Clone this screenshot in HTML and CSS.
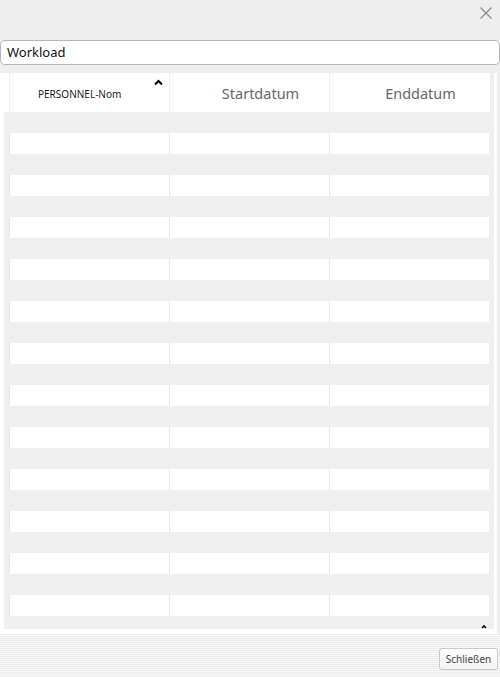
FILE: index.html
```html
<!DOCTYPE html>
<html>
<head>
<meta charset="utf-8">
<link rel="stylesheet" href="styles.css">
</head>
<body>
<div class="dialog">
  <div class="titlebar">
    <span class="close"><svg width="12" height="12" viewBox="0 0 12 12"><path d="M0.5 0.5L11.5 11.5M11.5 0.5L0.5 11.5" stroke="#8a8a8a" stroke-width="1.2" fill="none"/></svg></span>
  </div>
  <div class="title-input">Workload</div>
  <div class="panel">
    <div class="scroll">
      <div class="head">
        <div class="hcell first">PERSONNEL-Nom<span class="sort"><svg width="9" height="7" viewBox="0 0 9 7"><path d="M1 5.5L4.5 2L8 5.5" stroke="#000" stroke-width="2" fill="none"/></svg></span></div>
        <div class="hcell big">Startdatum</div>
        <div class="hcell big">Enddatum</div>
      </div>
      <div class="rows">
        <div class="row"></div><div class="row w"><div></div><div></div><div></div></div>
        <div class="row"></div><div class="row w"><div></div><div></div><div></div></div>
        <div class="row"></div><div class="row w"><div></div><div></div><div></div></div>
        <div class="row"></div><div class="row w"><div></div><div></div><div></div></div>
        <div class="row"></div><div class="row w"><div></div><div></div><div></div></div>
        <div class="row"></div><div class="row w"><div></div><div></div><div></div></div>
        <div class="row"></div><div class="row w"><div></div><div></div><div></div></div>
        <div class="row"></div><div class="row w"><div></div><div></div><div></div></div>
        <div class="row"></div><div class="row w"><div></div><div></div><div></div></div>
        <div class="row"></div><div class="row w"><div></div><div></div><div></div></div>
        <div class="row"></div><div class="row w"><div></div><div></div><div></div></div>
        <div class="row"></div><div class="row w"><div></div><div></div><div></div></div>
      </div>
      <span class="scroll-caret"><svg width="6" height="5" viewBox="0 0 6 5"><path d="M1 4L3 2L5 4" stroke="#000" stroke-width="1.6" fill="none"/></svg></span>
    </div>
  </div>
  <div class="footer">
    <button class="btn">Schließen</button>
  </div>
</div>
</body>
</html>
```

FILE: styles.css
```css
html, body {
  margin: 0;
  padding: 0;
}
body {
  width: 500px;
  height: 677px;
  overflow: hidden;
  background: #eeeeee;
  font-family: "Noto Sans", "Open Sans", sans-serif;
}
.dialog {
  display: flex;
  flex-direction: column;
  width: 500px;
  height: 677px;
}
.titlebar {
  height: 40px;
  display: flex;
  justify-content: flex-end;
  align-items: flex-start;
}
.close {
  display: block;
  width: 12px;
  height: 12px;
  margin-top: 7px;
  margin-right: 8px;
}
.close svg { display: block; }
.title-input {
  box-sizing: border-box;
  height: 25px;
  width: 500px;
  background: #ffffff;
  border: 1px solid #b4b4b4;
  border-radius: 5px;
  padding-left: 6px;
  font-size: 13px;
  line-height: 22px;
  color: #111;
}
.panel {
  margin-top: 8px;
  width: 497px;
  box-sizing: border-box;
  background: #ffffff;
  padding: 0 3px 5px 4px;
}
.scroll {
  position: relative;
  height: 556px;
  background: #efefef;
  overflow: hidden;
}
.head {
  display: flex;
  height: 39px;
  margin-right: 4px;
  padding-left: 5px;
  background: #ffffff;
}
.hcell {
  position: relative;
  box-sizing: border-box;
  width: 160px;
  border-left: 1px dotted #e2e2e2;
  display: flex;
  align-items: center;
  justify-content: center;
  font-size: 10px;
  color: #1a1a1a;
  padding-top: 2px;
}
.hcell.first {
  justify-content: flex-start;
  padding-left: 28px;
}
.hcell.big {
  font-size: 14.5px;
  color: #666666;
  padding-top: 1px;
}
.hcell.big:nth-child(2) { padding-left: 22px; }
.hcell.big:nth-child(3) { padding-left: 22px; }
.sort {
  position: absolute;
  top: 6px;
  right: 6px;
}
.sort svg, .scroll-caret svg { display: block; }
.rows {
  display: flex;
  flex-direction: column;
}
.row {
  height: 21px;
}
.row.w {
  display: flex;
  margin-left: 5px;
  width: 480px;
}
.row.w div {
  box-sizing: border-box;
  width: 160px;
  background: #ffffff;
  border-left: 1px solid #e6e6e6;
}
.scroll-caret {
  position: absolute;
  right: 7px;
  bottom: 0;
}
.footer {
  flex: 1;
  display: flex;
  justify-content: flex-end;
  align-items: flex-start;
  background: repeating-linear-gradient(to bottom, #ececec 0, #ececec 1px, #f7f7f7 1px, #f7f7f7 2px);
}
.btn {
  margin-top: 14px;
  margin-right: 2px;
  width: 59px;
  height: 22px;
  padding: 0;
  border: 1px solid #c8c8c8;
  border-radius: 3px;
  background: linear-gradient(#ffffff, #f4f4f4);
  font-family: "Noto Sans", "Open Sans", sans-serif;
  font-size: 10px;
  color: #444;
}
```
